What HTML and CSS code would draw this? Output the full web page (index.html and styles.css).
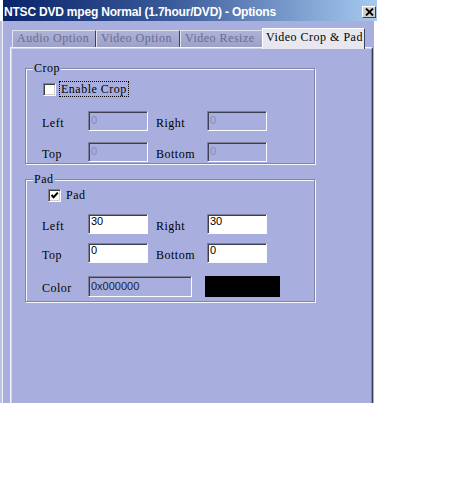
FILE: index.html
```html
<!DOCTYPE html>
<html>
<head>
<meta charset="utf-8">
<title>Options</title>
<link rel="stylesheet" href="styles.css">
</head>
<body>
<div class="window">
  <div class="titlebar">
    <span class="title">NTSC DVD mpeg Normal (1.7hour/DVD) - Options</span>
    <span class="close"><svg width="9" height="8" viewBox="0 0 9 8"><path d="M1 0.5L8 7.5M8 0.5L1 7.5" stroke="#000" stroke-width="1.8"/></svg></span>
  </div>
  <div class="client">
    <div class="tabs">
      <div class="tab">Audio Option</div>
      <div class="tab">Video Option</div>
      <div class="tab">Video Resize</div>
      <div class="tab active">Video Crop &amp; Pad</div>
    </div>
    <div class="panel">
      <div class="group crop">
        <span class="group-title">Crop</span>
        <div class="check-row">
          <span class="checkbox"></span>
          <span class="check-label focus">Enable Crop</span>
        </div>
        <div class="row r1">
          <span class="lbl">Left</span><span class="field disabled">0</span>
          <span class="lbl lbl2">Right</span><span class="field disabled">0</span>
        </div>
        <div class="row r2">
          <span class="lbl">Top</span><span class="field disabled">0</span>
          <span class="lbl lbl2">Bottom</span><span class="field disabled">0</span>
        </div>
      </div>
      <div class="group pad">
        <span class="group-title">Pad</span>
        <div class="check-row">
          <span class="checkbox checked"><svg width="9" height="9" viewBox="0 0 9 9"><path d="M1.5 4L3.6 6.2L7.8 1.6" fill="none" stroke="#000" stroke-width="2"/></svg></span>
          <span class="check-label">Pad</span>
        </div>
        <div class="row p1">
          <span class="lbl">Left</span><span class="field">30</span>
          <span class="lbl lbl2">Right</span><span class="field">30</span>
        </div>
        <div class="row p2">
          <span class="lbl">Top</span><span class="field">0</span>
          <span class="lbl lbl2">Bottom</span><span class="field">0</span>
        </div>
        <div class="row p3">
          <span class="lbl">Color</span><span class="field readonly">0x000000</span>
          <span class="swatch"></span>
        </div>
      </div>
    </div>
  </div>
</div>
</body>
</html>
```

FILE: styles.css
```css
html, body {
  margin: 0;
  padding: 0;
  background: #fff;
}

body {
  font-family: "Liberation Serif", "Times New Roman", serif;
  font-size: 12px;
  letter-spacing: 0.5px;
  color: #000;
}

.window {
  width: 377px;
  display: flex;
  flex-direction: column;
}

.titlebar {
  margin-left: 3px;
  height: 21px;
  background: linear-gradient(to right, #0a246a 0%, #3a5a9a 45%, #a6caf0 100%);
  display: flex;
  justify-content: space-between;
  align-items: flex-start;
}

.title {
  font-family: "Liberation Sans", Arial, sans-serif;
  font-weight: bold;
  font-size: 12px;
  letter-spacing: -0.2px;
  color: #fff;
  line-height: 15px;
  padding: 5px 0 0 1px;
  white-space: nowrap;
}

.close {
  width: 14px;
  height: 12px;
  margin: 6px 1px 0 0;
  box-sizing: border-box;
  background: #d4d0c8;
  border: 1px solid;
  border-color: #fff #404040 #404040 #fff;
  display: flex;
  align-items: center;
  justify-content: center;
}

.client {
  width: 374px;
  height: 382px;
  box-sizing: border-box;
  background: #a8afdf;
  border-left: 2px solid #bfc3e3;
  box-shadow: inset 1px 0 0 #eef0fa;
  padding: 7px 1px 0 8px;
  display: flex;
  flex-direction: column;
}

.tabs {
  display: flex;
  align-items: flex-end;
  height: 19px;
  padding-left: 2px;
  position: relative;
  z-index: 1;
}

.tab {
  width: 84px;
  height: 17px;
  flex: none;
  box-sizing: border-box;
  padding: 0 0 0 4px;
  line-height: 15px;
  background: linear-gradient(#aeb2d6, #9da1c7);
  color: #666c94;
  border-top: 1px solid #e2e4f2;
  border-left: 1px solid #e2e4f2;
  border-right: 1px solid #3e4260;
  white-space: nowrap;
}

.tab.active {
  width: 103px;
  height: 21px;
  margin: 0 -2px -2px -2px;
  padding: 1px 0 0 3px;
  background: #e6e7ef;
  color: #000;
  border-top-color: #fff;
  border-left-color: #fff;
}

.panel {
  flex: 1;
  box-sizing: border-box;
  border-top: 1px solid #f4f5fb;
  border-left: 1px solid #f4f5fb;
  border-right: 1px solid #3a3e58;
  box-shadow: inset 1px 1px 0 #d0d3ec, inset -1px 0 0 #8286a4;
  padding: 20px 0 0 14px;
  display: flex;
  flex-direction: column;
  align-items: flex-start;
}

.group {
  position: relative;
  width: 290px;
  box-sizing: border-box;
  border: 1px solid #8084a6;
  box-shadow: 1px 1px 0 #f6f7fc, inset 1px 1px 0 #f6f7fc;
  padding-left: 16px;
}

.group-title {
  position: absolute;
  top: -8px;
  left: 7px;
  line-height: 14px;
  padding: 0 1px;
  background: #a8afdf;
}

.crop {
  padding-top: 12px;
  padding-bottom: 1px;
}

.pad {
  margin-top: 15px;
  padding-top: 7px;
  padding-bottom: 4px;
}

.check-row {
  display: flex;
  align-items: center;
  height: 16px;
}

.checkbox {
  width: 13px;
  height: 13px;
  box-sizing: border-box;
  background: #fff;
  border: 1px solid;
  border-color: #808080 #fff #fff #808080;
  box-shadow: inset 1px 1px 0 #404040, inset -1px -1px 0 #d4d0c8;
  display: flex;
  align-items: center;
  justify-content: center;
}

.crop .checkbox {
  margin-left: 1px;
}

.pad .checkbox {
  margin-left: 6px;
}

.check-label {
  line-height: 14px;
  margin-left: 5px;
}

.check-label.focus {
  margin-left: 3px;
  border: 1px dotted #000;
  padding: 0 1px 0 1px;
}

.row {
  display: flex;
  align-items: center;
  height: 20px;
}

.r1 { margin-top: 14px; }
.r2 { margin-top: 11px; }
.p1 { margin-top: 11px; }
.p2 { margin-top: 9px; }
.p3 { margin-top: 13px; height: 21px; }

.lbl {
  width: 46px;
  line-height: 14px;
  padding-top: 3px;
  flex: none;
}

.lbl2 {
  width: 51px;
  padding-left: 8px;
}

.field {
  width: 60px;
  height: 20px;
  flex: none;
  box-sizing: border-box;
  background: #fff;
  border: 1px solid;
  border-color: #7c7f96 #fcfcff #fcfcff #7c7f96;
  box-shadow: inset 1px 1px 0 #3c3f52;
  font-family: "Liberation Sans", Arial, sans-serif;
  font-size: 11px;
  letter-spacing: 0;
  line-height: 13px;
  padding-left: 2px;
  color: #000;
  align-self: stretch;
}

.field.disabled {
  background: #a8afdf;
  color: #858bb8;
  padding-top: 2px;
}

.field.readonly {
  width: 104px;
  height: 21px;
  background: #a8afdf;
  color: #1c1e30;
  padding-top: 3px;
}

.swatch {
  width: 75px;
  height: 21px;
  margin-left: 13px;
  background: #000;
  flex: none;
}
```
